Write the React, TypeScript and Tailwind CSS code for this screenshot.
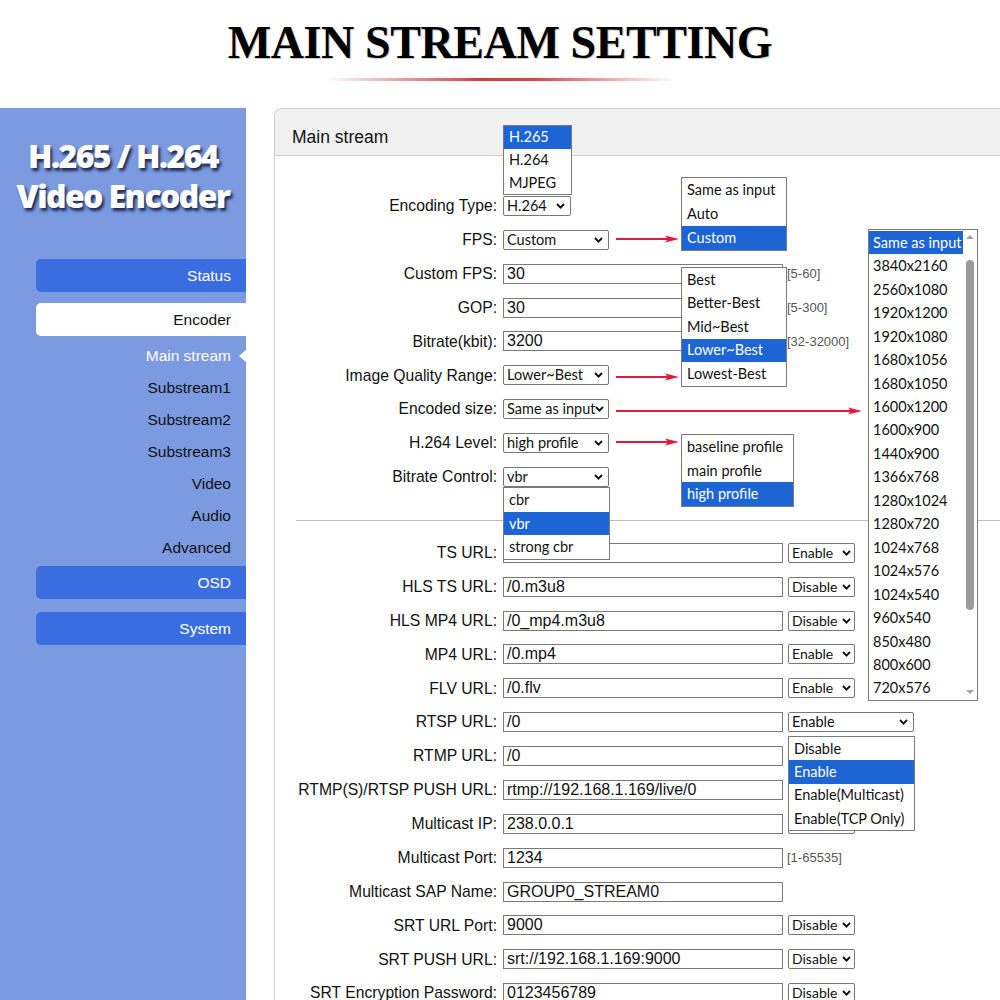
import React from "react";

const SANS = "font-['Liberation_Sans',Arial,sans-serif]";
const LATO = "font-['Lato','Noto_Sans',sans-serif]";

function Chevron() {
  return (
    <svg width="9" height="6" viewBox="0 0 9 6" className="shrink-0">
      <path d="M1 1 L4.5 4.6 L8 1" fill="none" stroke="#111" strokeWidth="1.9" />
    </svg>
  );
}

function Sel({ w, v, sm }: { w: string; v: string; sm?: boolean }) {
  return (
    <div
      className={`${w} ${LATO} h-[20px] border border-[#767676] rounded-[2px] bg-white flex items-center justify-between pl-[3px] ${
        sm ? "pr-[3px] text-[14px]" : "pr-[5px] text-[14.5px]"
      } text-[#111] leading-none shrink-0`}
    >
      <span className="whitespace-nowrap">{v}</span>
      <Chevron />
    </div>
  );
}

function Inp({ v }: { v: string }) {
  return (
    <div
      className={`${SANS} w-[280px] h-[20px] border border-[#7a7a7a] bg-white flex items-center pl-[3px] text-[16px] text-[#111] leading-none shrink-0 whitespace-nowrap`}
    >
      {v}
    </div>
  );
}

function Hint({ t }: { t: string }) {
  return <span className={`${SANS} text-[13px] text-[#555] ml-[4px] whitespace-nowrap`}>{t}</span>;
}

function Row({ label, children }: { label: string; children?: React.ReactNode }) {
  return (
    <div className="flex items-center h-[33.875px]">
      <div className={`${SANS} w-[222px] text-right text-[15.7px] text-[#111] whitespace-nowrap`}>{label}:</div>
      <div className="ml-[6px] flex items-center">{children}</div>
    </div>
  );
}

function List({
  pos,
  items,
  sel,
  ih,
}: {
  pos: string;
  items: string[];
  sel: number;
  ih: string;
}) {
  return (
    <div className={`absolute ${pos} border border-[#7a7a7a] bg-white ${LATO} text-[14.5px] text-[#111] flex flex-col`}>
      {items.map((it, i) => (
        <div
          key={it}
          className={`${ih} flex items-center pl-[5px] pr-[4px] whitespace-nowrap ${
            i === sel ? "bg-[#1d64d4] text-white" : ""
          }`}
        >
          {it}
        </div>
      ))}
    </div>
  );
}

function Arrow({ pos, len }: { pos: string; len: number }) {
  return (
    <svg className={`absolute ${pos}`} width={len} height="10" viewBox={`0 0 ${len} 10`}>
      <line x1="0" y1="5" x2={len - 10} y2="5" stroke="#e3183f" strokeWidth="2" />
      <path d={`M${len - 14} 1.5 L${len} 5 L${len - 14} 8.5 L${len - 11} 5 Z`} fill="#e3183f" />
    </svg>
  );
}

const resolutions = [
  "Same as input",
  "3840x2160",
  "2560x1080",
  "1920x1200",
  "1920x1080",
  "1680x1056",
  "1680x1050",
  "1600x1200",
  "1600x900",
  "1440x900",
  "1366x768",
  "1280x1024",
  "1280x720",
  "1024x768",
  "1024x576",
  "1024x540",
  "960x540",
  "850x480",
  "800x600",
  "720x576",
];

export default function App() {
  return (
    <div className="relative w-[1000px] h-[1000px] overflow-hidden bg-white">
      {/* Title */}
      <div className="h-[108px] flex flex-col items-center">
        <div className="pt-[20px] font-['Liberation_Serif','Times_New_Roman',serif] font-bold text-[46px] leading-[46px] text-black tracking-[-0.4px] [text-shadow:1px_1px_1px_rgba(0,0,0,0.25)]">
          MAIN STREAM SETTING
        </div>
        <div className="mt-[12px] w-[350px] h-[3px] rounded-full bg-[linear-gradient(to_right,rgba(210,40,40,0),rgba(200,40,40,0.9)_45%,rgba(205,40,40,0.85)_60%,rgba(210,40,40,0))]" />
      </div>

      <div className="flex h-[892px]">
        {/* Sidebar */}
        <div className="w-[246px] shrink-0 bg-[#7b9ae0] flex flex-col">
          <div className="pt-[28px] text-center font-['Open_Sans',sans-serif] font-extrabold text-[32px] leading-[40px] tracking-[-1.6px] text-white [text-shadow:2px_3px_3px_rgba(20,30,70,0.9)]">
            <div>H.265 / H.264</div>
            <div>Video Encoder</div>
          </div>
          <div className={`${SANS} mt-[43px] ml-[36px] flex flex-col text-[15.5px]`}>
            <div className="h-[33px] rounded-l-[5px] bg-[#3a6ee0] text-white flex items-center justify-end pr-[15px]">
              Status
            </div>
            <div className="mt-[11px] h-[33px] rounded-l-[5px] bg-white text-[#111] flex items-center justify-end pr-[15px]">
              Encoder
            </div>
            <div className="mt-[4px] flex flex-col text-[#111]">
              <div className="relative h-[32px] flex items-center justify-end pr-[15px] text-white">
                Main stream
                <div className="absolute right-0 top-[10px] w-0 h-0 border-y-[6px] border-y-transparent border-r-[7px] border-r-white" />
              </div>
              <div className="h-[32px] flex items-center justify-end pr-[15px]">Substream1</div>
              <div className="h-[32px] flex items-center justify-end pr-[15px]">Substream2</div>
              <div className="h-[32px] flex items-center justify-end pr-[15px]">Substream3</div>
              <div className="h-[32px] flex items-center justify-end pr-[15px]">Video</div>
              <div className="h-[32px] flex items-center justify-end pr-[15px]">Audio</div>
              <div className="h-[32px] flex items-center justify-end pr-[15px]">Advanced</div>
            </div>
            <div className="mt-[2px] h-[33px] rounded-l-[5px] bg-[#3a6ee0] text-white flex items-center justify-end pr-[15px]">
              OSD
            </div>
            <div className="mt-[13px] h-[33px] rounded-l-[5px] bg-[#3a6ee0] text-white flex items-center justify-end pr-[15px]">
              System
            </div>
          </div>
        </div>

        {/* Main panel */}
        <div className="ml-[28px] flex-1 border-l border-t border-[#cfcfcf] rounded-tl-[8px] flex flex-col">
          <div className="h-[47px] shrink-0 bg-[#f1f1f1] border-b border-[#cfcfcf] rounded-tl-[8px] flex items-center pl-[17px] pt-[10px]">
            <span className={`${SANS} text-[17.5px] text-[#111]`}>Main stream</span>
          </div>
          <div className="pt-[33px] flex flex-col">
            <Row label="Encoding Type">
              <Sel w="w-[68px]" v="H.264" />
            </Row>
            <Row label="FPS">
              <Sel w="w-[106px]" v="Custom" />
            </Row>
            <Row label="Custom FPS">
              <Inp v="30" />
              <Hint t="[5-60]" />
            </Row>
            <Row label="GOP">
              <Inp v="30" />
              <Hint t="[5-300]" />
            </Row>
            <Row label="Bitrate(kbit)">
              <Inp v="3200" />
              <Hint t="[32-32000]" />
            </Row>
            <Row label="Image Quality Range">
              <Sel w="w-[106px]" v="Lower~Best" />
            </Row>
            <Row label="Encoded size">
              <Sel w="w-[106px]" v="Same as input" />
            </Row>
            <Row label="H.264 Level">
              <Sel w="w-[106px]" v="high profile" />
            </Row>
            <Row label="Bitrate Control">
              <Sel w="w-[106px]" v="vbr" />
            </Row>

            <div className="mt-[26px] mb-[15px] ml-[21px] h-px bg-[#bdbdbd]" />

            <Row label="TS URL">
              <Inp v="" />
              <div className="ml-[5px]"><Sel sm w="w-[67px]" v="Enable" /></div>
            </Row>
            <Row label="HLS TS URL">
              <Inp v="/0.m3u8" />
              <div className="ml-[5px]"><Sel sm w="w-[67px]" v="Disable" /></div>
            </Row>
            <Row label="HLS MP4 URL">
              <Inp v="/0_mp4.m3u8" />
              <div className="ml-[5px]"><Sel sm w="w-[67px]" v="Disable" /></div>
            </Row>
            <Row label="MP4 URL">
              <Inp v="/0.mp4" />
              <div className="ml-[5px]"><Sel sm w="w-[67px]" v="Enable" /></div>
            </Row>
            <Row label="FLV URL">
              <Inp v="/0.flv" />
              <div className="ml-[5px]"><Sel sm w="w-[67px]" v="Enable" /></div>
            </Row>
            <Row label="RTSP URL">
              <Inp v="/0" />
              <div className="ml-[5px]"><Sel w="w-[126px]" v="Enable" /></div>
            </Row>
            <Row label="RTMP URL">
              <Inp v="/0" />
            </Row>
            <Row label="RTMP(S)/RTSP PUSH URL">
              <Inp v="rtmp://192.168.1.169/live/0" />
            </Row>
            <Row label="Multicast IP">
              <Inp v="238.0.0.1" />
              <div className="ml-[5px]"><Sel sm w="w-[67px]" v="" /></div>
            </Row>
            <Row label="Multicast Port">
              <Inp v="1234" />
              <Hint t="[1-65535]" />
            </Row>
            <Row label="Multicast SAP Name">
              <Inp v="GROUP0_STREAM0" />
            </Row>
            <Row label="SRT URL Port">
              <Inp v="9000" />
              <div className="ml-[5px]"><Sel sm w="w-[67px]" v="Disable" /></div>
            </Row>
            <Row label="SRT PUSH URL">
              <Inp v="srt://192.168.1.169:9000" />
              <div className="ml-[5px]"><Sel sm w="w-[67px]" v="Disable" /></div>
            </Row>
            <Row label="SRT Encryption Password">
              <Inp v="0123456789" />
              <div className="ml-[5px]"><Sel sm w="w-[67px]" v="Disable" /></div>
            </Row>
          </div>
        </div>
      </div>

      {/* Open dropdown overlays */}
      <List pos="left-[503px] top-[125px] w-[69px]" items={["H.265", "H.264", "MJPEG"]} sel={0} ih="h-[22.7px]" />
      <List pos="left-[681px] top-[177px] w-[106px]" items={["Same as input", "Auto", "Custom"]} sel={2} ih="h-[24px]" />
      <List
        pos="left-[681px] top-[267px] w-[106px]"
        items={["Best", "Better-Best", "Mid~Best", "Lower~Best", "Lowest-Best"]}
        sel={3}
        ih="h-[23.5px]"
      />
      <List
        pos="left-[681px] top-[434px] w-[113px]"
        items={["baseline profile", "main profile", "high profile"]}
        sel={2}
        ih="h-[23.7px]"
      />
      <List pos="left-[503px] top-[487px] w-[107px]" items={["cbr", "vbr", "strong cbr"]} sel={1} ih="h-[23.7px]" />
      <List
        pos="left-[788px] top-[736px] w-[127px]"
        items={["Disable", "Enable", "Enable(Multicast)", "Enable(TCP Only)"]}
        sel={1}
        ih="h-[23.3px]"
      />

      {/* Encoded size list with scrollbar */}
      <div className={`absolute left-[868px] top-[229px] w-[110px] h-[472px] border border-[#7a7a7a] bg-white flex ${LATO} text-[14.5px] text-[#111]`}>
        <div className="flex-1 flex flex-col pt-[1px]">
          {resolutions.map((r, i) => (
            <div
              key={r}
              className={`h-[23.5px] flex items-center pl-[4px] whitespace-nowrap ${
                i === 0 ? "bg-[#1d64d4] text-white" : ""
              }`}
            >
              {r}
            </div>
          ))}
        </div>
        <div className="w-[14px] flex flex-col items-center">
          <div className="mt-[5px] w-0 h-0 border-x-[4px] border-x-transparent border-b-[4px] border-b-[#a3a3a3]" />
          <div className="mt-[21px] w-[8px] h-[350px] rounded-full bg-[#9b9b9b]" />
          <div className="mt-auto mb-[6px] w-0 h-0 border-x-[4px] border-x-transparent border-t-[4px] border-t-[#a3a3a3]" />
        </div>
      </div>

      {/* Red arrows */}
      <Arrow pos="left-[616px] top-[234px]" len={63} />
      <Arrow pos="left-[616px] top-[372px]" len={63} />
      <Arrow pos="left-[616px] top-[406px]" len={246} />
      <Arrow pos="left-[616px] top-[437px]" len={63} />
    </div>
  );
}
